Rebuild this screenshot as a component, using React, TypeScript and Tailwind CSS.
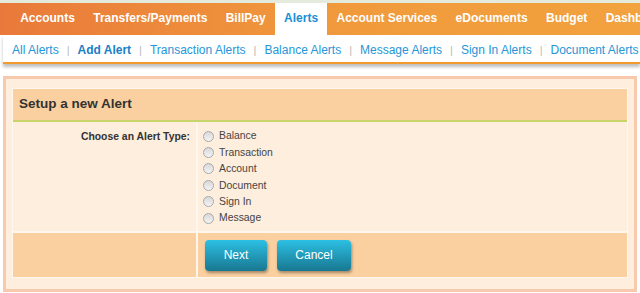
export default function App() {
  const tabs = ["Accounts", "Transfers/Payments", "BillPay", "Alerts", "Account Services", "eDocuments", "Budget", "Dashboard"];
  const links = ["All Alerts", "Add Alert", "Transaction Alerts", "Balance Alerts", "Message Alerts", "Sign In Alerts", "Document Alerts"];
  const types = ["Balance", "Transaction", "Account", "Document", "Sign In", "Message"];

  return (
    <div className="w-[640px] h-[293px] overflow-hidden bg-white font-['Liberation_Sans',Arial,sans-serif]">
      <div className="h-[3px] bg-[#e4eadc]" />
      {/* main nav */}
      <div className="h-[32px] bg-gradient-to-r from-[#e9793a] via-[#f0993c] to-[#f2a23e] flex items-stretch pl-[11px] whitespace-nowrap overflow-hidden">
        {tabs.map((t) => (
          <div
            key={t}
            className={
              t === "Alerts"
                ? "px-[9.2px] pb-[3px] flex items-center text-[12px] font-bold bg-white text-[#1a8fd6]"
                : "px-[9.2px] pb-[3px] flex items-center text-[12px] font-bold text-white"
            }
          >
            {t}
          </div>
        ))}
      </div>
      {/* sub nav */}
      <div className="ml-[3px] h-[29px] pt-[3px] bg-white border-b-2 border-[#f29a2e] shadow-[0_3px_3px_rgba(0,0,0,0.25)] flex items-center pl-[9px] whitespace-nowrap overflow-hidden text-[12px] text-[#2596d8]">
        {links.map((l, i) => (
          <div key={l} className="flex items-center">
            {i > 0 && <span className="mx-[8px] text-[#b9b9b9] text-[11px]">|</span>}
            <span className={l === "Add Alert" ? "font-bold text-[#1a7fc4]" : ""}>{l}</span>
          </div>
        ))}
      </div>
      {/* panel */}
      <div className="mx-[3px] mt-[12px] border-[3px] border-[#f9c9ad] bg-[#feeedd] px-[6px] pt-[9px] pb-[11px]">
        <div className="border border-[#fff7ee]">
          <div className="h-[33px] bg-[#fad0a0] border-b-2 border-[#c8d56b] flex items-center pl-[6px] text-[13.5px] font-bold text-[#333]">
            Setup a new Alert
          </div>
          <div className="flex border-b-2 border-[#fff7ee]">
            <div className="w-[185px] border-r-2 border-[#fff7ee] text-right pr-[6px] pt-[7px] text-[10.4px] font-bold text-[#333]">
              Choose an Alert Type:
            </div>
            <div className="flex-1 pl-[5px] pt-[6px] pb-[5px] flex flex-col">
              {types.map((t) => (
                <label key={t} className="flex items-center h-[16.4px] text-[10.4px] text-[#444]">
                  <span className="w-[11px] h-[11px] rounded-full border border-[#a9a9a9] bg-gradient-to-b from-[#d8d8d8] to-[#f4f4f4] mr-[5px]" />
                  {t}
                </label>
              ))}
            </div>
          </div>
          <div className="flex h-[44px] bg-[#fad0a0]">
            <div className="w-[185px] border-r-2 border-[#fff7ee]" />
            <div className="flex-1 flex items-center pl-[7px] gap-[10px]">
              <button className="w-[62px] h-[31px] rounded-[4px] bg-gradient-to-b from-[#2cc0e4] to-[#187891] text-white text-[12px] shadow-[1px_2px_3px_rgba(0,0,0,0.35)]">
                Next
              </button>
              <button className="w-[74px] h-[31px] rounded-[4px] bg-gradient-to-b from-[#2cc0e4] to-[#187891] text-white text-[12px] shadow-[1px_2px_3px_rgba(0,0,0,0.35)]">
                Cancel
              </button>
            </div>
          </div>
        </div>
      </div>
    </div>
  );
}
